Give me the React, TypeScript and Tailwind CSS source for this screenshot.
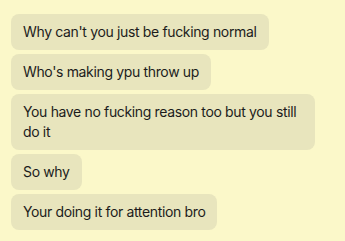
export default function App() {
  const msgs = [
    "Why can't you just be fucking normal",
    "Who's making ypu throw up",
    "You have no fucking reason too but you still do it",
    "So why",
    "Your doing it for attention bro",
  ];
  return (
    <div className="w-[345px] h-[241px] bg-[#fbf8c9] pt-[14px] pl-[11px] flex flex-col items-start gap-1" style={{ fontFamily: "Inter, sans-serif" }}>
      {msgs.map((m, i) => (
        <div key={i} className="max-w-[304px] rounded-lg bg-[#e8e5bd] px-3 py-2 text-sm leading-5 tracking-[-0.025em] text-[#1c1c1c]">
          {m}
        </div>
      ))}
    </div>
  );
}
